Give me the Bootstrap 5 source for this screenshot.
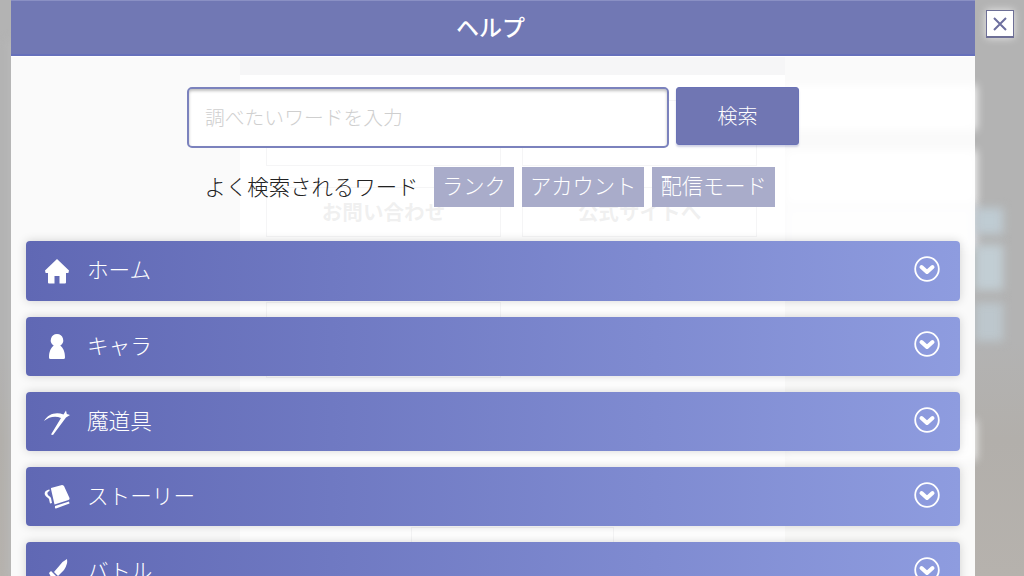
<!DOCTYPE html>
<html lang="ja">
<head>
    <meta charset="UTF-8">
    <meta name="viewport" content="width=device-width, initial-scale=1.0">
    <title>ヘルプ</title>
    <link rel="stylesheet" href="https://cdn.jsdelivr.net/npm/bootstrap@5.3.0/dist/css/bootstrap.min.css">
    <style>
        html, body {
            height: 100%;
            overflow: hidden;
        }
        body {
            background: linear-gradient(180deg, #b3b3b3 0, #b3b3b3 340px, #b2afab 440px, #b6b2ad 100%);
            font-family: "Noto Sans CJK JP", "Noto Sans", sans-serif;
        }
        /* blurred page behind the dialog */
        .back-layer {
            position: absolute;
            inset: 0;
            overflow: hidden;
        }
        .back-blob {
            position: absolute;
            filter: blur(5px);
        }
        .back-box {
            position: absolute;
            border: 1px solid #777780;
            background: #fff;
            color: #2a2a2a;
            font-size: 20.600px;
            font-weight: 700;
            text-align: center;
            line-height: 30px;
        }
        .help-panel {
            position: absolute;
            left: 11px;
            top: 0;
            width: 964px;
            height: 576px;
            background: rgba(255, 255, 255, .93);
        }
        .help-head {
            height: 56px;
            padding-right: 5px;
            background: #7178b4;
            border-top: 1px solid #8a90c4;
            border-bottom: 2px solid #6670bb;
            color: #fff;
            font-size: 23px;
            font-weight: 500;
            line-height: 50px;
            box-shadow: 0 1px 0 #fff;
        }
        .search-row {
            margin-top: 31px;
            margin-left: 176px;
        }
        .search-input {
            width: 482px;
            height: 61px;
            border: 2px solid #7b82bd;
            border-radius: 5px;
            box-shadow: inset 0 2px 3px rgba(0, 0, 0, .25);
            font-size: 19.800px;
            font-weight: 300;
            padding: 0 16px 3px;
        }
        .search-input::placeholder {
            color: #cfcfcf;
        }
        .search-btn {
            width: 123px;
            height: 58px;
            margin-left: 7px;
            background: #7076b3;
            border: 1px solid #6a72b6;
            border-radius: 3px;
            box-shadow: 0 2px 2px rgba(100, 105, 170, .3);
            color: #fff;
            font-size: 20px;
            font-weight: 300;
        }
        .word-row {
            margin-top: 19px;
            margin-left: 193.500px;
            height: 40px;
            color: #222;
            font-size: 21.400px;
            font-weight: 300;
        }
        .word-title {
            width: 229.500px;
            padding-bottom: 2px;
        }
        .word-chip {
            height: 40px;
            margin-right: 8px;
            padding: 0 8px;
            background: #a9acca;
            color: #fff;
            font-size: 21.300px;
            line-height: 36px;
            white-space: nowrap;
        }
        .cat-list {
            margin: 34.400px 15px 0;
        }
        .cat-row {
            height: 59.500px;
            margin-bottom: 15.700px;
            padding-left: 17px;
            padding-right: 20px;
            padding-bottom: 3px;
            background: linear-gradient(90deg, #6068b4, #8e9cdf);
            border-radius: 4px;
            box-shadow: 0 0 10px rgba(0, 0, 0, .17);
            color: #fff;
            font-size: 21.600px;
            font-weight: 300;
        }
        .cat-icon {
            width: 28px;
            height: 28px;
            margin-right: 16px;
            margin-top: 3px;
            flex: none;
        }
        .cat-chev {
            width: 26px;
            height: 26px;
            margin-left: auto;
            margin-top: -1px;
            flex: none;
        }
        .close-box {
            position: absolute;
            left: 986px;
            top: 10px;
            width: 28px;
            height: 28px;
            padding: 0;
            background: #fff;
            border: 1px solid #6d6f96;
            border-bottom-width: 2px;
            border-radius: 0;
            box-shadow: 0 0 8px rgba(255, 255, 255, .7);
        }
    </style>
</head>
<body>
    <div class="back-layer">
        <div class="back-blob" style="left:8px;top:40px;width:232px;height:540px;background:#b8b8b8"></div>
        <div class="back-blob" style="left:785px;top:85px;width:191px;height:45px;background:#fff"></div>
        <div class="back-blob" style="left:785px;top:150px;width:191px;height:55px;background:#fff"></div>
        <div class="back-blob" style="left:785px;top:205px;width:191px;height:45px;background:#e8e8ee"></div>
        <div class="back-blob" style="left:785px;top:420px;width:191px;height:40px;background:#f4f4f4"></div>
        <div class="back-blob" style="left:975px;top:208px;width:28px;height:26px;background:#bfccd3"></div>
        <div class="back-blob" style="left:975px;top:245px;width:28px;height:45px;background:#c2ced4"></div>
        <div class="back-blob" style="left:975px;top:303px;width:28px;height:38px;background:#bdc7cd"></div>
        <div class="back-blob" style="left:240px;top:55px;width:545px;height:530px;background:#f4f5fd;filter:none"></div>
        <div class="back-blob" style="left:240px;top:55px;width:545px;height:20px;background:#808088;filter:none"></div>
        <div class="back-box" style="left:266px;top:100px;width:235px;height:66px"></div>
        <div class="back-box" style="left:522px;top:100px;width:235px;height:66px"></div>
        <div class="back-box" style="left:266px;top:187px;width:235px;height:50px;padding-top:8px">お問い合わせ</div>
        <div class="back-box" style="left:522px;top:187px;width:235px;height:50px;padding-top:8px">公式サイトへ</div>
        <div class="back-box" style="left:266px;top:302px;width:235px;height:76px"></div>
        <div class="back-box" style="left:411px;top:527px;width:203px;height:60px"></div>
    </div>

    <div class="help-panel">
        <div class="help-head text-center">ヘルプ</div>

        <div class="search-row d-flex align-items-start">
            <input type="text" class="search-input" placeholder="調べたいワードを入力">
            <button type="button" class="btn search-btn">検索</button>
        </div>

        <div class="word-row d-flex align-items-center">
            <div class="word-title">よく検索されるワード</div>
            <span class="word-chip">ランク</span>
            <span class="word-chip">アカウント</span>
            <span class="word-chip">配信モード</span>
        </div>

        <div class="cat-list">
            <div class="cat-row d-flex align-items-center">
                <svg class="cat-icon" viewBox="0 0 28 28"><path fill="#fff" d="M14 2 2 13.500l.6 2.500H5v9.500q0 1 1 1h5.500v-7.500h5V26.500H22q1 0 1-1V16h2.400l.6-2.500z"/></svg>
                <span>ホーム</span>
                <svg class="cat-chev" viewBox="0 0 26 26"><circle cx="13" cy="13" r="11.800" fill="none" stroke="#fff" stroke-width="1.800"/><path fill="none" stroke="#fff" stroke-width="4" stroke-linecap="round" stroke-linejoin="round" d="m7.500 11 5.500 5 5.500-5"/></svg>
            </div>
            <div class="cat-row d-flex align-items-center">
                <svg class="cat-icon" viewBox="0 0 28 28"><path fill="#fff" d="M14 2a6.300 6.300 0 0 0-3.300 11.600C8 16 6 19.500 6 25.500q0 1.500 1.500 1.500h13q1.500 0 1.500-1.500c0-6-2-9.500-4.700-11.900A6.300 6.300 0 0 0 14 2z"/></svg>
                <span>キャラ</span>
                <svg class="cat-chev" viewBox="0 0 26 26"><circle cx="13" cy="13" r="11.800" fill="none" stroke="#fff" stroke-width="1.800"/><path fill="none" stroke="#fff" stroke-width="4" stroke-linecap="round" stroke-linejoin="round" d="m7.500 11 5.500 5 5.500-5"/></svg>
            </div>
            <div class="cat-row d-flex align-items-center">
                <svg class="cat-icon" viewBox="0 0 28 28"><path fill="#fff" d="M1 13C5 6 13 3.500 20.500 6.500L23 2.500l.8 3.500 3.200 1-4 2.500L10 27l-2-.5L18 10C12 7.500 6 9 1 13z"/></svg>
                <span>魔道具</span>
                <svg class="cat-chev" viewBox="0 0 26 26"><circle cx="13" cy="13" r="11.800" fill="none" stroke="#fff" stroke-width="1.800"/><path fill="none" stroke="#fff" stroke-width="4" stroke-linecap="round" stroke-linejoin="round" d="m7.500 11 5.500 5 5.500-5"/></svg>
            </div>
            <div class="cat-row d-flex align-items-center">
                <svg class="cat-icon" viewBox="0 0 28 28"><path fill="#fff" d="M8 5 19 2q1 0 2 1l5.500 12q.5 1.500-1 2l-14 4.500L8 6zM12 23l14-4.500.5 2-13.500 5q-1.500.5-1-2.500zM6.500 6.500C3 7 1 9 2 12c1 2 3 2.500 4 4l1 4.500 2-.5-1-5c-1-2-3-2-3.500-4-.5-1.500.5-2.500 2-3z"/></svg>
                <span>ストーリー</span>
                <svg class="cat-chev" viewBox="0 0 26 26"><circle cx="13" cy="13" r="11.800" fill="none" stroke="#fff" stroke-width="1.800"/><path fill="none" stroke="#fff" stroke-width="4" stroke-linecap="round" stroke-linejoin="round" d="m7.500 11 5.500 5 5.500-5"/></svg>
            </div>
            <div class="cat-row d-flex align-items-center">
                <svg class="cat-icon" viewBox="0 0 28 28"><path fill="#fff" d="M24 1q1 5-3 11l-6 6-4-4 6-7q3-4 7-6zM8 13l8 8-2 2-3-2-5 6-3-3 5-5-2-4z"/></svg>
                <span>バトル</span>
                <svg class="cat-chev" viewBox="0 0 26 26"><circle cx="13" cy="13" r="11.800" fill="none" stroke="#fff" stroke-width="1.800"/><path fill="none" stroke="#fff" stroke-width="4" stroke-linecap="round" stroke-linejoin="round" d="m7.500 11 5.500 5 5.500-5"/></svg>
            </div>
        </div>
    </div>

    <button type="button" class="btn close-box d-flex align-items-center justify-content-center" aria-label="閉じる">
        <svg width="16" height="16" viewBox="0 0 16 16"><path fill="none" stroke="#6d6f9f" stroke-width="2" d="m2 2 12 12M14 2 2 14"/></svg>
    </button>

    <script src="https://cdn.jsdelivr.net/npm/bootstrap@5.3.0/dist/js/bootstrap.bundle.min.js"></script>
</body>
</html>
